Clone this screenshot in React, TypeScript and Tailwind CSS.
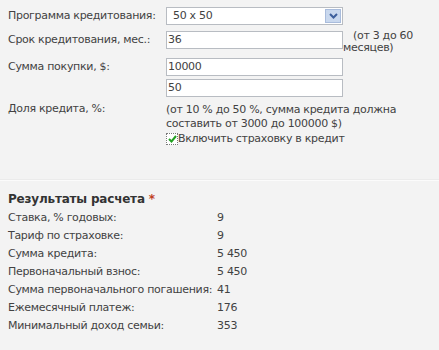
import React from "react";

const font = { fontFamily: '"DejaVu Sans", sans-serif' };

export default function App() {
  const rows: [string, string][] = [
    ["Ставка, % годовых:", "9"],
    ["Тариф по страховке:", "9"],
    ["Сумма кредита:", "5 450"],
    ["Первоначальный взнос:", "5 450"],
    ["Сумма первоначального погашения:", "41"],
    ["Ежемесячный платеж:", "176"],
    ["Минимальный доход семьи:", "353"],
  ];
  return (
    <div className="w-[439px] h-[350px] bg-[#f3f3f3] text-[#424242] text-[11px] leading-[14px] tracking-[-0.3px] whitespace-nowrap overflow-hidden" style={font}>
      <div className="pl-[8px]">
        <div className="flex items-center h-[18px] mt-[7px]">
          <div className="w-[158px]">Программа кредитования:</div>
          <div className="w-[177px] h-[18px] bg-white border border-[#b8bcc2] flex items-center justify-between pl-[6px] pr-[1px]">
            <span>50 x 50</span>
            <span className="w-[16px] h-[14px] bg-[#c9d8ee] border border-[#a9bcdc] flex items-center justify-center">
              <svg width="9" height="6" viewBox="0 0 9 6"><path d="M1 1l3.5 3.5L8 1" stroke="#3d5f9c" strokeWidth="2" fill="none" /></svg>
            </span>
          </div>
        </div>
        <div className="flex items-start h-[18px] mt-[6px]">
          <div className="w-[158px] h-[18px] flex items-center">Срок кредитования, мес.:</div>
          <div className="w-[177px] h-[18px] bg-white border border-[#b8bcc2] flex items-center pl-[1px]">36</div>
          <div className="leading-[12px] -mt-[1px]">
            <div className="pl-[10px]">(от 3 до 60</div>
            <div>месяцев)</div>
          </div>
        </div>
        <div className="flex items-center h-[18px] mt-[9px]">
          <div className="w-[158px]">Сумма покупки, $:</div>
          <div className="w-[177px] h-[18px] bg-white border border-[#b8bcc2] flex items-center pl-[1px]">10000</div>
        </div>
        <div className="flex items-start mt-[3px]">
          <div className="w-[158px] pt-[23px]">Доля кредита, %:</div>
          <div className="flex flex-col">
            <div className="w-[177px] h-[18px] bg-white border border-[#b8bcc2] flex items-center pl-[1px]">50</div>
            <div className="leading-[14px] mt-[6px]">
              <div>(от 10 % до 50 %, сумма кредита должна</div>
              <div>составить от 3000 до 100000 $)</div>
            </div>
            <label className="flex items-center mt-[2px] h-[12px]">
              <span className="w-[12px] h-[12px] border border-dotted border-[#7a7a7a] bg-white flex items-center justify-center">
                <svg width="9" height="8" viewBox="0 0 9 8"><path d="M1 4l2.5 2.5L8 1" stroke="#21a121" strokeWidth="2" fill="none" /></svg>
              </span>
              <span>Включить страховку в кредит</span>
            </label>
          </div>
        </div>
      </div>
      <div className="mt-[34px] h-[2px] bg-[#fbfbfb] border-t border-[#ebebeb]" />
      <div className="pl-[8px] pt-[10px]">
        <div className="font-bold text-[12px] leading-[16px] tracking-[-0.2px] text-[#333]">
          Результаты расчета <span className="text-[#c0401f]">*</span>
        </div>
        <div className="mt-[2px]">
          {rows.map(([k, v]) => (
            <div key={k} className="flex h-[18px] items-center">
              <div className="w-[209px]">{k}</div>
              <div>{v}</div>
            </div>
          ))}
        </div>
      </div>
    </div>
  );
}
